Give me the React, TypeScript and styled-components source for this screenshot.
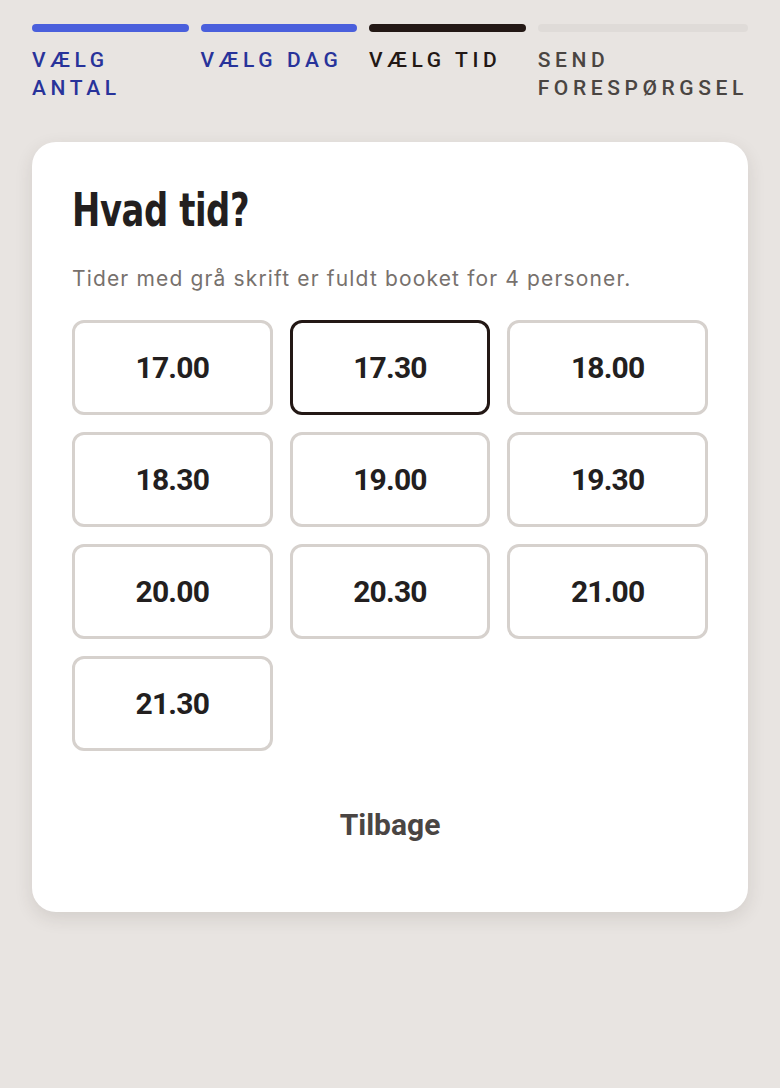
import React, { useState } from "react";
import styled, { createGlobalStyle } from "styled-components";

const Global = createGlobalStyle`
  html, body { margin: 0; padding: 0; background: #e8e4e1; }
  body { font-family: Roboto, "Noto Sans", sans-serif; }
  * { box-sizing: border-box; }
`;

const Page = styled.div`
  padding: 24px 32px 40px;
  min-height: 1088px;
`;

const Steps = styled.ol`
  list-style: none;
  margin: 0;
  padding: 0;
  display: grid;
  grid-template-columns: repeat(4, 1fr);
  column-gap: 12px;
`;

type StepState = "done" | "active" | "todo";

const barColor: Record<StepState, string> = {
  done: "#4a5fdc",
  active: "#231815",
  todo: "#dfdbd8",
};
const textColor: Record<StepState, string> = {
  done: "#28339a",
  active: "#231815",
  todo: "#4a4542",
};

const Step = styled.li<{ $state: StepState }>`
  display: flex;
  flex-direction: column;
  gap: 14px;
  color: ${(p) => textColor[p.$state]};
  &::before {
    content: "";
    display: block;
    height: 8px;
    border-radius: 4px;
    background: ${(p) => barColor[p.$state]};
  }
`;

const StepLabel = styled.span`
  font-family: Roboto, "Noto Sans", sans-serif;
  font-weight: 500;
  font-size: 21px;
  line-height: 28px;
  letter-spacing: 4.6px;
  text-transform: uppercase;
`;

const Card = styled.section`
  margin-top: 40px;
  background: #ffffff;
  border-radius: 24px;
  padding: 40px 40px 53px;
  box-shadow: 0 6px 18px rgba(60, 50, 40, 0.12);
`;

const Heading = styled.h1`
  margin: 0;
  font-family: "DejaVu Sans", sans-serif;
  font-stretch: condensed;
  font-weight: 700;
  font-size: 47px;
  line-height: 56px;
  letter-spacing: -0.5px;
  color: #231f1f;
  transform: scaleX(0.8);
  transform-origin: left center;
`;

const Sub = styled.p`
  margin: 27px 0 0;
  font-family: Inter, Roboto, sans-serif;
  font-size: 21px;
  line-height: 28px;
  letter-spacing: 1.15px;
  color: #77716d;
`;

const Times = styled.div`
  margin-top: 27px;
  display: grid;
  grid-template-columns: repeat(3, 1fr);
  gap: 17px;
`;

const TimeButton = styled.button<{ $selected?: boolean }>`
  height: 95px;
  border-radius: 12px;
  border: 3px solid ${(p) => (p.$selected ? "#231815" : "#d6d1cd")};
  background: #ffffff;
  font-family: Roboto, "Noto Sans", sans-serif;
  font-weight: 700;
  font-size: 30px;
  letter-spacing: -0.8px;
  color: #231f1f;
  cursor: pointer;
`;

const Footer = styled.div`
  display: flex;
  justify-content: center;
  margin-top: 40px;
`;

const BackButton = styled.button`
  border: none;
  background: none;
  padding: 16px 24px;
  font-family: Roboto, "Noto Sans", sans-serif;
  font-weight: 700;
  font-size: 30px;
  line-height: 36px;
  color: #4a4543;
  cursor: pointer;
`;

const steps: { label: string; state: StepState }[] = [
  { label: "Vælg antal", state: "done" },
  { label: "Vælg dag", state: "done" },
  { label: "Vælg tid", state: "active" },
  { label: "Send forespørgsel", state: "todo" },
];

const times = ["17.00", "17.30", "18.00", "18.30", "19.00", "19.30", "20.00", "20.30", "21.00", "21.30"];

export default function App() {
  const [selected, setSelected] = useState("17.30");
  return (
    <>
      <Global />
      <Page>
        <Steps>
          {steps.map((s) => (
            <Step key={s.label} $state={s.state}>
              <StepLabel>{s.label}</StepLabel>
            </Step>
          ))}
        </Steps>
        <Card>
          <Heading>Hvad tid?</Heading>
          <Sub>Tider med grå skrift er fuldt booket for 4 personer.</Sub>
          <Times>
            {times.map((t) => (
              <TimeButton key={t} $selected={t === selected} onClick={() => setSelected(t)}>
                {t}
              </TimeButton>
            ))}
          </Times>
          <Footer>
            <BackButton>Tilbage</BackButton>
          </Footer>
        </Card>
      </Page>
    </>
  );
}
